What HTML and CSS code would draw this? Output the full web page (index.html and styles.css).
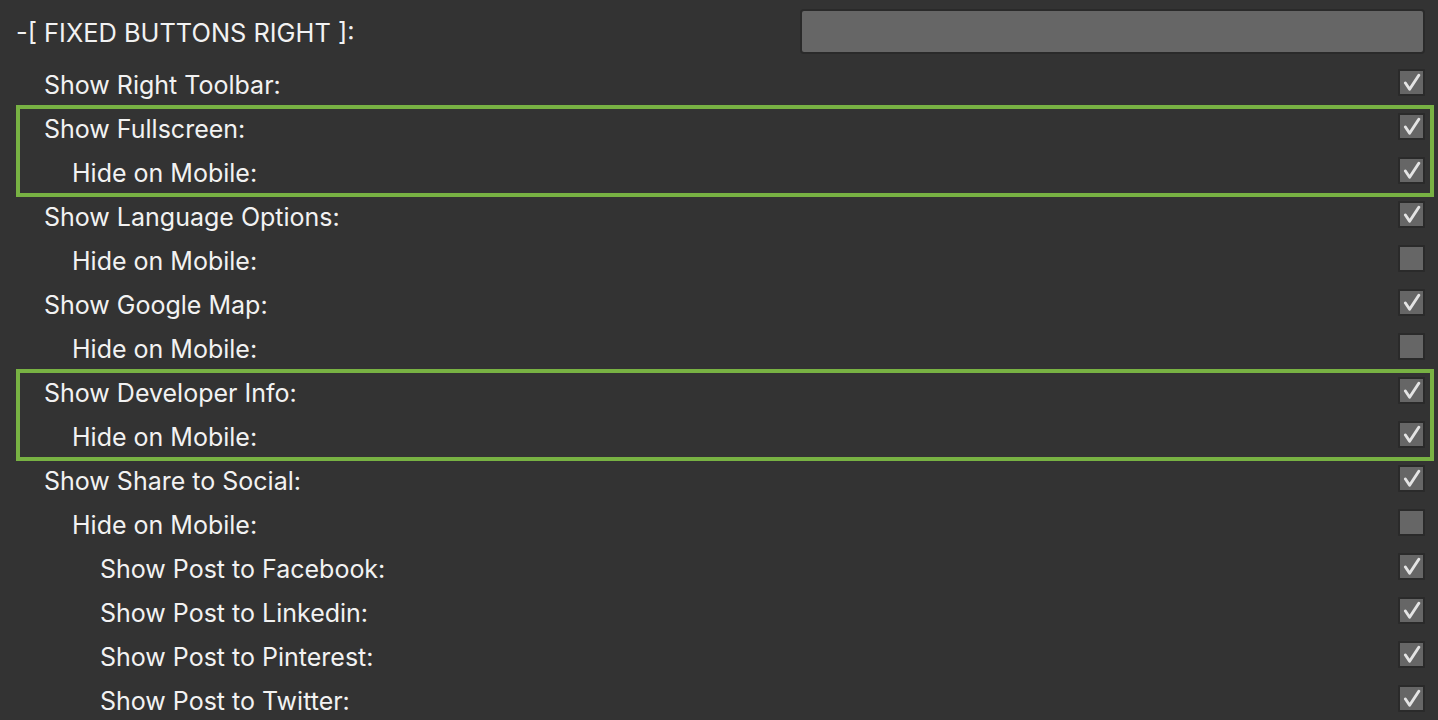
FILE: index.html
```html
<!DOCTYPE html>
<html>
<head>
<meta charset="utf-8">
<link rel="stylesheet" href="styles.css">
</head>
<body>
<div class="panel">
  <div class="header">
    <span class="header-label">-[ FIXED BUTTONS RIGHT ]:</span>
    <div class="header-input"></div>
  </div>

  <div class="row lvl0"><span class="label">Show Right Toolbar:</span><span class="cb checked"></span></div>

  <div class="group">
    <div class="row lvl0"><span class="label">Show Fullscreen:</span><span class="cb checked"></span></div>
    <div class="row lvl1"><span class="label">Hide on Mobile:</span><span class="cb checked"></span></div>
  </div>

  <div class="row lvl0"><span class="label">Show Language Options:</span><span class="cb checked"></span></div>
  <div class="row lvl1"><span class="label">Hide on Mobile:</span><span class="cb"></span></div>
  <div class="row lvl0"><span class="label">Show Google Map:</span><span class="cb checked"></span></div>
  <div class="row lvl1"><span class="label">Hide on Mobile:</span><span class="cb"></span></div>

  <div class="group">
    <div class="row lvl0"><span class="label">Show Developer Info:</span><span class="cb checked"></span></div>
    <div class="row lvl1"><span class="label">Hide on Mobile:</span><span class="cb checked"></span></div>
  </div>

  <div class="row lvl0"><span class="label">Show Share to Social:</span><span class="cb checked"></span></div>
  <div class="row lvl1"><span class="label">Hide on Mobile:</span><span class="cb"></span></div>
  <div class="row lvl2"><span class="label">Show Post to Facebook:</span><span class="cb checked"></span></div>
  <div class="row lvl2"><span class="label">Show Post to Linkedin:</span><span class="cb checked"></span></div>
  <div class="row lvl2"><span class="label">Show Post to Pinterest:</span><span class="cb checked"></span></div>
  <div class="row lvl2"><span class="label">Show Post to Twitter:</span><span class="cb checked"></span></div>
</div>
</body>
</html>
```

FILE: styles.css
```css
html, body {
  margin: 0;
  padding: 0;
  background: #333333;
  overflow: hidden;
}
body {
  font-family: Inter, "Liberation Sans", sans-serif;
  font-size: 25px;
  color: #f2f2f2;
}
.panel {
  padding: 0 6px 0 18px;
}
.header {
  height: 63px;
  display: flex;
  align-items: center;
  justify-content: space-between;
  margin-left: -2px;
}
.header-label {
  line-height: 44px;
  font-size: 25.4px;
  position: relative;
  top: 1px;
}
.header-input {
  width: 621px;
  height: 41px;
  background: #666666;
  border: 2px solid #2a2a2a;
  border-radius: 4px;
  margin-right: 7px;
}
.row {
  height: 44px;
  display: flex;
  align-items: center;
  justify-content: space-between;
  padding-right: 7px;
}
.label {
  line-height: 44px;
}
.lvl0 { padding-left: 26px; }
.lvl1 { padding-left: 54px; }
.lvl2 { padding-left: 82px; }
.group {
  outline: 4px solid #78b243;
  outline-offset: -2px;
}
.cb {
  width: 23px;
  height: 23px;
  background: #666666;
  border: 2px solid #2a2a2a;
  border-radius: 1px;
  margin-bottom: 6px;
  position: relative;
}
.cb.checked::after {
  content: "";
  position: absolute;
  left: 3px;
  top: 2px;
  width: 18px;
  height: 18px;
  background-repeat: no-repeat;
  background-size: 18px 18px;
  background-image: url("data:image/svg+xml;utf8,<svg xmlns='http://www.w3.org/2000/svg' viewBox='0 0 18 18'><path d='M2.4 10 L6.6 16.2 L15.8 2.2' fill='none' stroke='%23e4e4e4' stroke-width='2.9' stroke-linecap='round' stroke-linejoin='round'/></svg>");
}
```
